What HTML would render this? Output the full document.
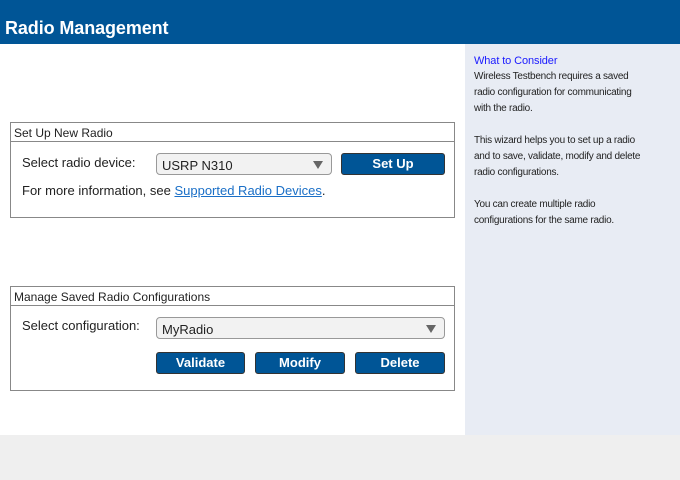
<!DOCTYPE html>
<html><head><style>
*{margin:0;padding:0;box-sizing:border-box}
body{width:680px;height:480px;background:#efefef;font-family:"Liberation Sans",Arial,sans-serif;position:relative;overflow:hidden;color:#222}
.hdr{position:absolute;left:0;top:0;width:680px;height:44px;background:#005596;color:#fff;font-weight:bold;font-size:18px;padding:18px 0 0 5px;letter-spacing:-0.1px}
.main{position:absolute;left:0;top:44px;width:465px;height:391px;background:#fff}
.side{position:absolute;left:465px;top:44px;width:215px;height:391px;background:#e8ecf4;padding:9px 0 0 9px;font-size:10px;letter-spacing:-0.25px;line-height:16px;color:#222}
.side h4{color:#1a1aff;font-weight:normal;font-size:11px;letter-spacing:-0.1px;margin-bottom:0}
.panel{position:absolute;left:10px;width:445px;border:1px solid #888;background:#fff}
.ptitle{height:19px;border-bottom:1px solid #888;font-size:12px;padding:3px 0 0 3px}
.abs{position:absolute;font-size:13px}
.sel{position:absolute;height:22px;border:1px solid #999;border-radius:4px;background:#f2f2f2;font-size:13px;padding:4px 0 0 5px}
.sel:after{content:"";position:absolute;right:8px;top:7px;border-left:5px solid transparent;border-right:5px solid transparent;border-top:8px solid #666}
.btn{position:absolute;height:22px;background:#005596;border:1px solid #333;border-radius:3px;color:#fff;font-weight:bold;font-size:13px;text-align:center;line-height:20px}
a{color:#1a6fc7;text-decoration:underline}
</style></head><body>
<div class="hdr">Radio Management</div>
<div class="main"></div>
<div class="side"><h4>What to Consider</h4>Wireless Testbench requires a saved<br>radio configuration for communicating<br>with the radio.<br><br>This wizard helps you to set up a radio<br>and to save, validate, modify and delete<br>radio configurations.<br><br>You can create multiple radio<br>configurations for the same radio.</div>
<div class="panel" style="top:122px;height:96px">
<div class="ptitle">Set Up New Radio</div>
<div class="abs" style="left:11px;top:32px">Select radio device:</div>
<div class="sel" style="left:145px;top:30px;width:176px">USRP N310</div>
<div class="btn" style="left:330px;top:30px;width:104px">Set Up</div>
<div class="abs" style="left:11px;top:60px">For more information, see <a>Supported Radio Devices</a>.</div>
</div>
<div class="panel" style="top:286px;height:105px">
<div class="ptitle">Manage Saved Radio Configurations</div>
<div class="abs" style="left:11px;top:31px">Select configuration:</div>
<div class="sel" style="left:145px;top:30px;width:289px">MyRadio</div>
<div class="btn" style="left:145px;top:65px;width:89px">Validate</div>
<div class="btn" style="left:244px;top:65px;width:90px">Modify</div>
<div class="btn" style="left:344px;top:65px;width:90px">Delete</div>
</div>
</body></html>
